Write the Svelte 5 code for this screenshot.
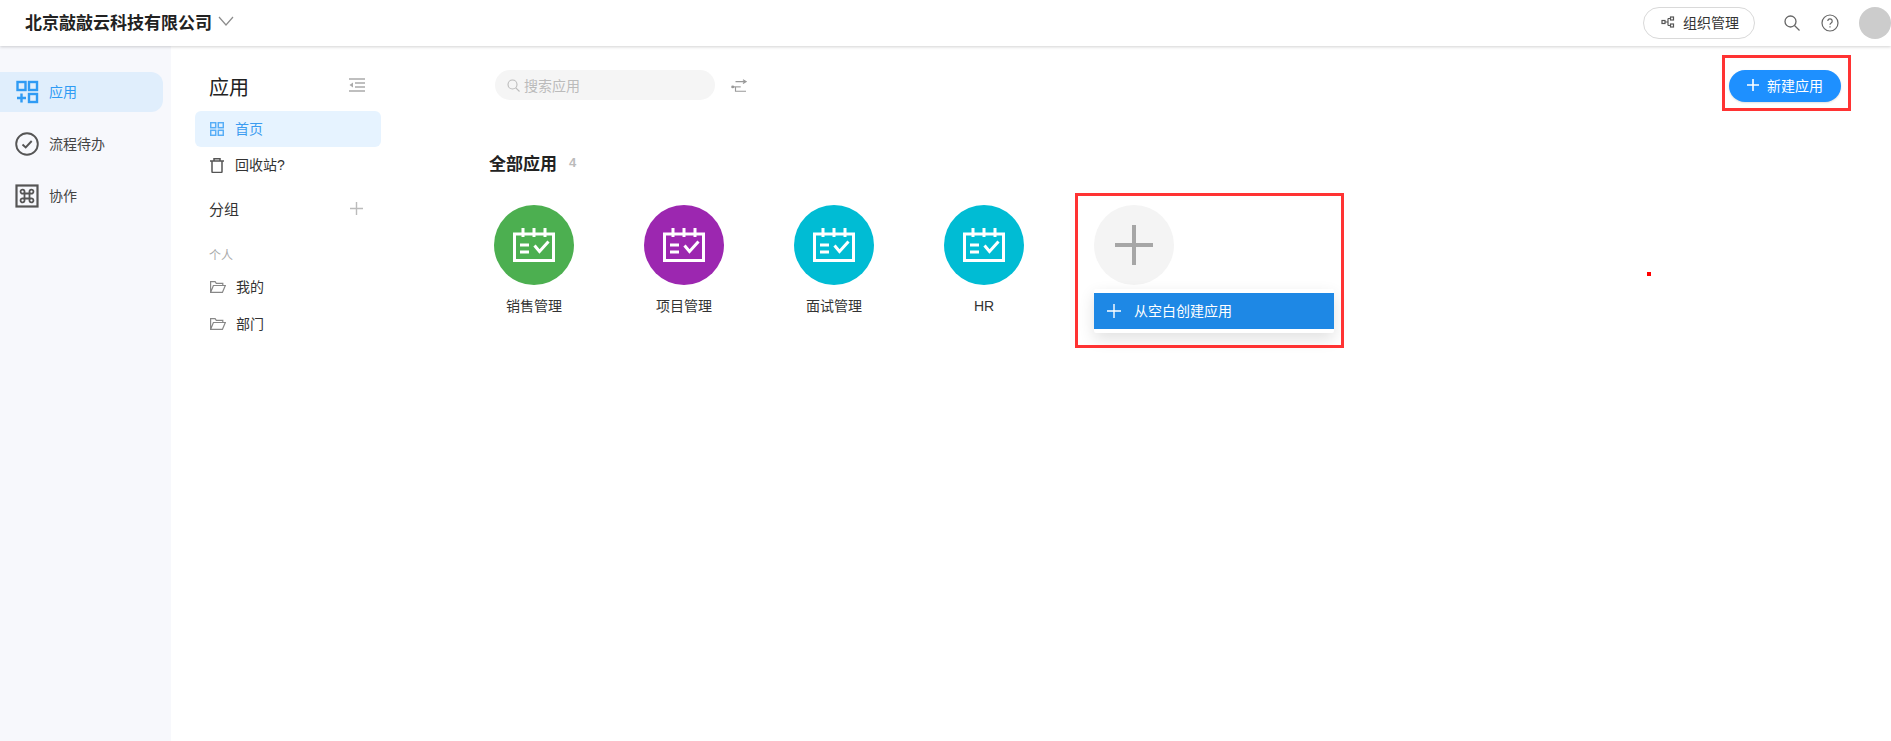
<script>
  const apps = [
    { name: '销售管理', color: '#4caf50' },
    { name: '项目管理', color: '#9c27b0' },
    { name: '面试管理', color: '#00bcd4' },
    { name: 'HR', color: '#00bcd4' }
  ];
</script>

<div class="page">
  <header class="topbar">
    <div class="org">
      <span class="org-name">北京敲敲云科技有限公司</span>
      <svg class="chevron" width="16" height="10" viewBox="0 0 16 10"><path d="M1 1l7 8 7-8" fill="none" stroke="#8c8c8c" stroke-width="1.2"/></svg>
    </div>
    <div class="top-actions">
      <button class="org-btn">
        <svg width="14" height="12" viewBox="0 0 14 12" fill="none" stroke="#555" stroke-width="1.2"><rect x="1" y="4.5" width="3" height="3"/><rect x="9.5" y="1" width="3" height="3"/><rect x="9.5" y="8" width="3" height="3"/><path d="M4 6h3M7 2.5h2.5M7 9.500h2.500M7 2.500v7"/></svg>
        <span>组织管理</span>
      </button>
      <svg class="search-top" width="18" height="18" viewBox="0 0 18 18" fill="none" stroke="#666" stroke-width="1.3"><circle cx="7.500" cy="7.500" r="5.500"/><path d="M11.500 11.500l5 5"/></svg>
      <svg class="help" width="18" height="18" viewBox="0 0 18 18" fill="none" stroke="#666" stroke-width="1.200"><circle cx="9" cy="9" r="8"/><path d="M6.800 7a2.200 2.200 0 1 1 3.400 1.900c-.8.500-1.200.9-1.200 1.800"/><path d="M9 12.300v1.200"/></svg>
      <span class="avatar"></span>
    </div>
  </header>

  <div class="body">
    <nav class="rail">
      <a class="rail-item active">
        <svg width="24" height="24" viewBox="0 0 24 24" fill="none" stroke="#2f9bf4" stroke-width="2.400"><rect x="2.500" y="2" width="8" height="8"/><rect x="14" y="2" width="8" height="8"/><rect x="14" y="14" width="8" height="8"/><path d="M6.500 13.500v9M2 18h9"/></svg>
        <span>应用</span>
      </a>
      <a class="rail-item">
        <svg width="24" height="24" viewBox="0 0 24 24" fill="none" stroke="#555" stroke-width="1.900"><circle cx="12" cy="12" r="10.800"/><path d="M7.500 12.500l3.200 3 6-6.500"/></svg>
        <span>流程待办</span>
      </a>
      <a class="rail-item">
        <svg width="24" height="24" viewBox="0 0 24 24" fill="none" stroke="#555"><rect x="1.500" y="1.500" width="21" height="21" stroke-width="2.200"/><path stroke-width="1.800" d="M9.500 9.500h5v5h-5zM9.500 9.500H8a2 2 0 1 1 1.500-1.500zM14.500 9.500V8A2 2 0 1 1 16 9.500zM14.500 14.500H16A2 2 0 1 1 14.500 16zM9.500 14.500V16A2 2 0 1 1 8 14.500z"/></svg>
        <span>协作</span>
      </a>
    </nav>

    <aside class="panel">
      <div class="panel-head">
        <span class="panel-title">应用</span>
        <svg class="collapse" width="16" height="14" viewBox="0 0 16 14" fill="none" stroke="#aaa" stroke-width="1.300"><path d="M0 1h16M6 5h10M6 9h10M0 13h16"/><path d="M4 4.500v5L.5 7z" fill="#aaa" stroke="none"/></svg>
      </div>
      <a class="panel-item active">
        <svg width="14" height="14" viewBox="0 0 14 14" fill="none" stroke="#57aef7" stroke-width="1.500"><rect x=".7" y=".7" width="5" height="5"/><rect x="8.300" y=".7" width="5" height="5"/><rect x=".7" y="8.300" width="5" height="5"/><rect x="8.300" y="8.300" width="5" height="5"/></svg>
        <span>首页</span>
      </a>
      <a class="panel-item">
        <svg width="14" height="15" viewBox="0 0 14 15" fill="none" stroke="#555" stroke-width="1.500"><path d="M0 3h14M4 3V.8h6V3M2 3v10.500a1 1 0 0 0 1 1h8a1 1 0 0 0 1-1V3"/></svg>
        <span>回收站?</span>
      </a>
      <div class="group-head">
        <span>分组</span>
        <svg width="13" height="13" viewBox="0 0 13 13" stroke="#bbb" stroke-width="1.400"><path d="M6.500 0v13M0 6.500h13"/></svg>
      </div>
      <div class="group-label">个人</div>
      <a class="folder">
        <svg width="16" height="12" viewBox="0 0 16 12" fill="none" stroke="#888" stroke-width="1.200"><path d="M.6 11.400V.6h4.500l1.200 1.700h6.500v2.200M.6 11.400h11.800l2.900-6.900H3.400z"/></svg>
        <span>我的</span>
      </a>
      <a class="folder">
        <svg width="16" height="12" viewBox="0 0 16 12" fill="none" stroke="#888" stroke-width="1.200"><path d="M.6 11.400V.6h4.500l1.200 1.700h6.500v2.200M.6 11.400h11.800l2.900-6.900H3.400z"/></svg>
        <span>部门</span>
      </a>
    </aside>

    <main class="main">
      <div class="toolbar">
        <div class="search">
          <svg width="13" height="13" viewBox="0 0 13 13" fill="none" stroke="#bbb" stroke-width="1.100"><circle cx="5.500" cy="5.500" r="4.500"/><path d="M8.800 8.800l3.700 3.700"/></svg>
          <span>搜索应用</span>
        </div>
        <svg class="sort" width="16" height="14" viewBox="0 0 18 16" fill="none" stroke="#999" stroke-width="1.300"><path d="M5 3h12M13.500 .8L17 3l-3.500 2.200"/><path d="M2 9h9"/><path d="M5 9v5h12"/><circle cx="1.800" cy="9" r="1.700" fill="#999" stroke="none"/></svg>
        <button class="new-btn">
          <svg width="12" height="12" viewBox="0 0 12 12" stroke="#fff" stroke-width="1.600"><path d="M6 0v12M0 6h12"/></svg>
          <span>新建应用</span>
        </button>
      </div>

      <div class="section-head">
        <span class="section-title">全部应用</span>
        <span class="count">4</span>
      </div>

      <div class="grid">
        {#each apps as app}
          <div class="app">
            <div class="circle" style="background: {app.color}">
              <svg width="42" height="34" viewBox="0 0 42 34" fill="none" stroke="#fff" stroke-width="3"><path d="M1.500 6h39v26.500h-39z"/><path d="M10 0v9M21 0v9M32 0v9"/><path d="M7 17h9M7 24h9"/><path d="M21.500 17.500l5 6 9-10"/></svg>
            </div>
            <span class="app-name">{app.name}</span>
          </div>
        {/each}
        <div class="app add">
          <div class="circle add-circle">
            <svg width="38" height="40" viewBox="0 0 38 40" stroke="#a6a6a6" stroke-width="4"><path d="M19 0v40M0 20h38"/></svg>
          </div>
          <div class="add-menu">
            <div class="add-row">
              <svg width="14" height="14" viewBox="0 0 14 14" stroke="#fff" stroke-width="1.400"><path d="M7 0v14M0 7h14"/></svg>
              <span>从空白创建应用</span>
            </div>
          </div>
        </div>
      </div>
    </main>
  </div>

  <div class="mark mark-new"></div>
  <div class="mark mark-add"></div>
  <div class="dot"></div>
</div>

<style>
  :global(body) {
    margin: 0;
    background: #fff;
    overflow: hidden;
  }

  .page {
    position: relative;
    height: 741px;
    display: flex;
    flex-direction: column;
    font-family: "Liberation Sans", "Noto Sans CJK SC", sans-serif;
    color: #333;
    font-size: 14px;
  }

  svg {
    display: block;
    flex: none;
  }

  .topbar {
    height: 46px;
    flex: none;
    display: flex;
    align-items: center;
    justify-content: space-between;
    padding: 0 0 0 25px;
    box-shadow: 0 1px 3px rgba(0, 0, 0, 0.18);
    position: relative;
    background: #fff;
  }

  .org {
    display: flex;
    align-items: center;
    gap: 6px;
    padding-bottom: 4px;
  }

  .org-name {
    font-size: 17px;
    font-weight: 700;
    color: #222;
  }

  .top-actions {
    display: flex;
    align-items: center;
  }

  .org-btn {
    width: 112px;
    height: 32px;
    box-sizing: border-box;
    display: flex;
    align-items: center;
    gap: 8px;
    padding: 0 0 2px 17px;
    border: 1px solid #d9d9d9;
    border-radius: 16px;
    background: #fff;
    font: inherit;
    font-size: 14px;
    color: #333;
  }

  .search-top {
    margin-left: 28px;
  }

  .help {
    margin-left: 20px;
  }

  .avatar {
    width: 32px;
    height: 32px;
    border-radius: 50%;
    background: #ccc;
    margin-left: 20px;
    margin-right: 0;
  }

  .body {
    flex: 1;
    display: flex;
    min-height: 0;
  }

  .rail {
    width: 171px;
    flex: none;
    background: #f7f8fc;
    padding-top: 26px;
    display: flex;
    flex-direction: column;
    gap: 12px;
  }

  .rail-item {
    height: 40px;
    width: 163px;
    display: flex;
    align-items: center;
    gap: 10px;
    padding-left: 15px;
    box-sizing: border-box;
    border-radius: 0 12px 12px 0;
    font-size: 14px;
    color: #444;
  }

  .rail-item span,
  .panel-item span,
  .folder span {
    padding-bottom: 2px;
  }

  .rail-item.active {
    background: #e0eefc;
    color: #2f9bf4;
  }

  .panel {
    width: 319px;
    flex: none;
    box-sizing: border-box;
    padding: 0 0 0 24px;
  }

  .panel-head {
    height: 65px;
    width: 186px;
    box-sizing: border-box;
    padding: 16px 16px 0 14px;
    display: flex;
    justify-content: space-between;
    align-items: center;
  }

  .collapse {
    margin-bottom: 3px;
  }

  .panel-title {
    font-size: 20px;
    color: #222;
  }

  .panel-item {
    width: 186px;
    height: 36px;
    box-sizing: border-box;
    padding-left: 15px;
    display: flex;
    align-items: center;
    gap: 11px;
    border-radius: 6px;
    font-size: 14px;
    color: #333;
  }

  .panel-item.active {
    background: #e6f3ff;
    color: #3c9cf0;
  }

  .group-head {
    width: 186px;
    box-sizing: border-box;
    padding: 0 18px 0 14px;
    margin-top: 13px;
    height: 24px;
    display: flex;
    justify-content: space-between;
    align-items: center;
    font-size: 15px;
    color: #333;
  }

  .group-label {
    font-size: 12px;
    color: #aaa;
    padding-left: 14px;
    margin-top: 27px;
    height: 18px;
    line-height: 18px;
  }

  .folder {
    height: 37px;
    display: flex;
    align-items: center;
    gap: 10px;
    padding-left: 15px;
    font-size: 14px;
    color: #333;
  }

  .group-label + .folder {
    margin-top: 3px;
  }

  .main {
    flex: 1;
    min-width: 0;
    padding: 23px 50px 0 0;
  }

  .toolbar {
    display: flex;
    align-items: center;
    height: 32px;
    padding-left: 5px;
  }

  .search {
    width: 220px;
    height: 30px;
    border-radius: 15px;
    background: #f5f5f5;
    box-sizing: border-box;
    padding-left: 12px;
    display: flex;
    align-items: center;
    gap: 4px;
    font-size: 14px;
    color: #bbb;
  }

  .sort {
    margin-left: 16px;
    margin-top: 1px;
  }

  .new-btn {
    margin-left: auto;
    margin-top: 2px;
    width: 112px;
    height: 32px;
    border: none;
    border-radius: 16px;
    background: #1e90ff;
    color: #fff;
    font: inherit;
    font-size: 14px;
    display: flex;
    align-items: center;
    justify-content: center;
    gap: 8px;
    padding: 0 0 2px;
    box-shadow: 0 1px 2px rgba(0, 0, 0, 0.12);
  }

  .section-head {
    margin-top: 48px;
    display: flex;
    align-items: center;
    gap: 12px;
    height: 26px;
    margin-left: -1px;
  }

  .section-title {
    font-size: 17px;
    font-weight: 700;
    color: #222;
  }

  .count {
    font-size: 13px;
    font-weight: 700;
    color: #bbb;
  }

  .grid {
    margin-top: 30px;
    padding-left: 4px;
    display: flex;
    gap: 70px;
  }

  .app {
    width: 80px;
    display: flex;
    flex-direction: column;
    align-items: center;
  }

  .circle {
    width: 80px;
    height: 80px;
    border-radius: 50%;
    display: flex;
    align-items: center;
    justify-content: center;
  }

  .app-name {
    margin-top: 11px;
    line-height: 20px;
    font-size: 14px;
    white-space: nowrap;
    color: #333;
  }

  .add {
    position: relative;
  }

  .add-circle {
    background: #f4f4f4;
  }

  .add-menu {
    position: absolute;
    top: 84px;
    left: 0;
    width: 240px;
    box-sizing: border-box;
    padding: 4px 0;
    background: #fff;
    border-radius: 2px;
    box-shadow: 0 6px 16px rgba(0, 0, 0, 0.12);
  }

  .add-row {
    height: 36px;
    background: #1e88e5;
    color: #fff;
    display: flex;
    align-items: center;
    gap: 13px;
    padding: 0 0 2px 13px;
    box-sizing: border-box;
    font-size: 14px;
  }

  .add-row svg {
    margin-top: 2px;
  }

  .mark {
    position: absolute;
    border: 3px solid #ff3333;
    box-sizing: border-box;
  }

  .mark-new {
    left: 1722px;
    top: 55px;
    width: 129px;
    height: 56px;
  }

  .mark-add {
    left: 1075px;
    top: 193px;
    width: 269px;
    height: 155px;
  }

  .dot {
    position: absolute;
    left: 1647px;
    top: 272px;
    width: 4px;
    height: 4px;
    background: #f00;
  }
</style>
